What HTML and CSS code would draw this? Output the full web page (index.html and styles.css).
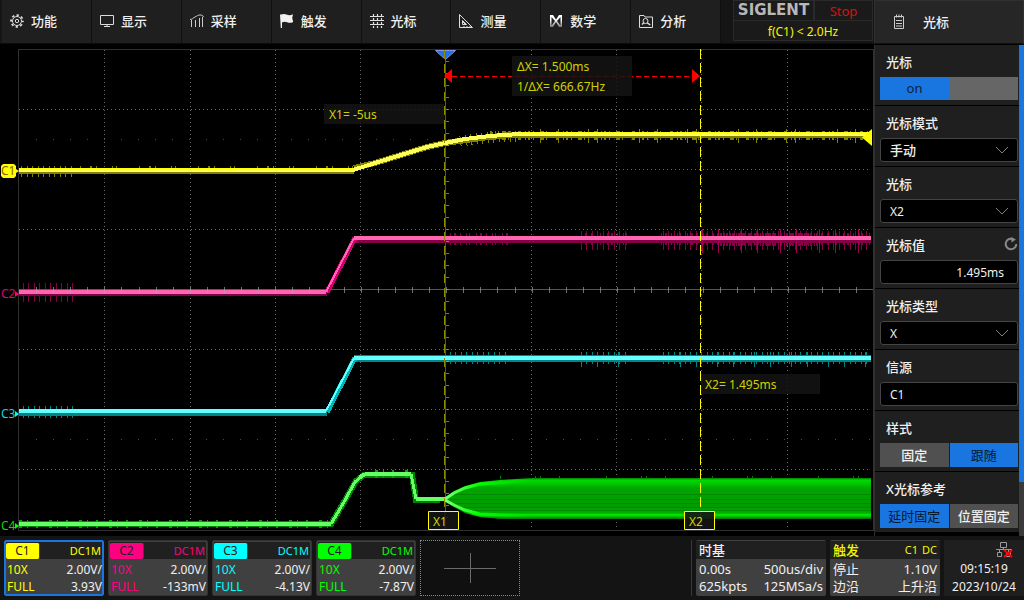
FILE: index.html
```html
<!DOCTYPE html>
<html lang="zh-CN">
<head>
<meta charset="utf-8">
<meta name="viewport" content="width=device-width, initial-scale=1">
<title>SIGLENT</title>
<link rel="stylesheet" href="styles.css">
</head>
<body>
<div class="screen">
  <div class="upper">
    <main class="scope">
      <header class="topbar">
        <nav class="menu">
          <button class="menu-item"><svg class="icon" viewBox="0 0 14 14" fill="none" stroke="#ddd"><circle cx="7" cy="7" r="4.500"/><circle cx="7" cy="7" r="5.900" stroke-width="1.800" stroke-dasharray="2.320 2.314" stroke-dashoffset="1.160"/><circle cx="7" cy="7" r="1.700"/></svg>功能</button>
          <button class="menu-item"><svg class="icon" viewBox="0 0 14 14" fill="none" stroke="#ddd"><path d="M.5 1.500h13v9H.5zM7 10.500v2M4 12.500h6"/></svg>显示</button>
          <button class="menu-item"><svg class="icon" viewBox="0 0 14 14" fill="none" stroke="#ccc"><path d="M1.500 13V6M5.500 13V6M9.500 13V4M12.500 13V3M0 5.500c2 0 3-1.500 5-2.500s3-2 5-2 3 .5 3.500 2"/></svg>采样</button>
          <button class="menu-item"><svg class="icon" viewBox="0 0 14 14"><path d="M0 .500h1.500c2-1 4-.3 5.500.3s3.500.9 6-.5l-.8 3.700 1 4c-2.500 1.200-4.500 1-6 .3S3.500 7.500 2 8.500V14H.8z" fill="#f2f2f2"/></svg>触发</button>
          <button class="menu-item"><svg class="icon" viewBox="0 0 14 14" fill="none" stroke="#e0e0e0" stroke-width="1.200" stroke-dasharray="3 1"><path d="M3.500 0v14M7.500 0v14M11.500 0v14M0 2.500h14M0 6.500h14M0 10.500h14"/></svg>光标</button>
          <button class="menu-item"><svg class="icon" viewBox="0 0 14 14" fill="none" stroke="#ddd"><path d="M.5 .5v13h13zM3.500 6.500v4h4zM3.500 7.500l3 3M11 13v-1M8 13v-1M5 13v-1"/></svg>测量</button>
          <button class="menu-item"><svg class="icon" viewBox="0 0 14 14"><defs><linearGradient id="mathFill" x2="0" y2="1"><stop offset=".4" stop-color="#fff"/><stop offset="1" stop-color="#777"/></linearGradient></defs><path d="M1 1h3l3 4.500L10 1h3v12h-3L7 8l-3 5H1zM2.500 3v8.500L6 7zM11.500 3v8.500L8 7z" fill="url(#mathFill)" fill-rule="evenodd"/></svg>数学</button>
          <button class="menu-item"><svg class="icon" viewBox="0 0 14 14" fill="none" stroke="#ddd"><path d="M.5 1.500h4.500l1 1.500h7.500v10.500H.5z"/><circle cx="6.500" cy="7" r="2.500"/><path d="M8.300 8.800l3 2.200M3 10.500l2-2" stroke-width="1.500"/></svg>分析</button>
        </nav>
        <div class="status">
          <div class="status-row"><strong class="brand">SIGLENT</strong><span class="run-state">Stop</span></div>
          <div class="freq">f(C1) &lt; 2.0Hz</div>
        </div>
      </header>

      <svg class="plot" viewBox="0 44 874 490" role="img" aria-label="C1 C2 C3 C4">
        <defs>
          <linearGradient id="burst" x2="0" y2="1">
            <stop offset="0" stop-color="#007d00"/><stop offset=".05" stop-color="#00d800"/><stop offset=".14" stop-color="#00c800"/><stop offset=".25" stop-color="#00a500"/><stop offset=".7" stop-color="#009c00"/><stop offset=".85" stop-color="#00ad00"/><stop offset=".9" stop-color="#00ef00"/><stop offset=".95" stop-color="#00b000"/><stop offset="1" stop-color="#007000"/>
          </linearGradient>
          <linearGradient id="burstGlow"><stop offset="0" stop-color="#80ff80"/><stop offset=".4" stop-color="#0f0"/><stop offset="1" stop-color="#0f0" stop-opacity="0"/></linearGradient>
          <clipPath id="burstClip"><path d="M445 497L454 491 465 486 480 482 500 480 530 478H871V519H500L480 517 465 513 454 507 445 502z"/></clipPath>
        </defs>

        <g class="grid" fill="none" stroke="#6a6a6a" shape-rendering="crispEdges">
          <path stroke="#303030" d="M18.500 49.500H873.500V530.500H18.500z"/>
          <path stroke-dasharray="1 3" d="M104.500 50V530M190.500 50V530M275.500 50V530M360.500 50V530M531.500 50V530M616.500 50V530M701.500 50V530M787.500 50V530"/>
          <path stroke-dasharray="1 3" d="M19 109.500H870M19 169.500H870M19 229.500H870M19 349.500H870M19 409.500H870M19 469.500H870"/>
          <path stroke="#484848" stroke-dasharray="1 16" d="M36 139.500H870M36 439.500H870"/>
          <path stroke="#555" d="M19 289.500H873M445.500 50V530"/>
        </g>

        <g fill="none" shape-rendering="crispEdges">
          <path stroke="#828200" stroke-width="6" d="M19 171H354M354 168L375 163 427 147 445 143 480 138 510 135H871"/>
          <path stroke="#828200" stroke-width="8" stroke-dasharray="1 9 2 4 1 15 1 3 1 22" d="M80 170H354"/>
          <path stroke="#828200" stroke-width="9" stroke-dasharray="2 3 1 6 4 2 1 9 3 4 1 2" d="M490 135H871"/>
          <path stroke="#828200" stroke-width="14" stroke-dasharray="1 17 1 29 1 8 1 41" d="M540 136H871"/>
          <path stroke="#828200" stroke-width="11" stroke-dasharray="1 5 1 4" d="M21 171H76M460 141L485 138 510 136H520"/>
          <path stroke="#ffff5a" stroke-width="4" d="M19 170H353L375 163 427 147 445 143 465 139 490 136 520 134H871"/>
          <path stroke="#ff0" stroke-width="1" d="M19 168.500H353M520 132.500H871"/>

          <path stroke="#850047" stroke-width="7" d="M19 292H327M354 239H871"/>
          <path stroke="#d00070" stroke-width="5" d="M327 292L355 238"/>
          <path stroke="#850047" stroke-width="19" stroke-dasharray="1 4 1 5" d="M23 292H76M581 240H627M663 240H871"/>
          <path stroke="#850047" stroke-width="12" stroke-dasharray="1 3 2 4 1 5 1 2 1 6" d="M450 239H510M581 239H627M661 239H871"/>
          <path stroke="#850047" stroke-width="13" stroke-dasharray="2 2 1 1" d="M720 239H818"/>
          <path stroke="#a00055" stroke-width="24" stroke-dasharray="1 15 1 22" d="M702 241H871"/>
          <path stroke="#ff65b0" stroke-width="4" d="M19 292H326M354 238H871"/>
          <path stroke="#ff65b0" stroke-width="2" d="M326 292L354 238"/>
          <path stroke="#ff0080" stroke-width="1" d="M19 289.500H326"/>

          <path stroke="#008585" stroke-width="7" d="M19 412H327M354 358H871"/>
          <path stroke="#00b5b5" stroke-width="5" d="M327 412L355 358"/>
          <path stroke="#008585" stroke-width="12" stroke-dasharray="1 4 1 5" d="M23 412H76M450 358H510M581 358H627M663 358H871"/>
          <path stroke="#008585" stroke-width="15" stroke-dasharray="1 15 1 20" d="M581 359H627M680 359H871"/>
          <path stroke="#65ffff" stroke-width="4" d="M19 411H326M354 358H871"/>
          <path stroke="#65ffff" stroke-width="2" d="M326 411L354 358"/>

          <path stroke="#008400" stroke-width="6" d="M19 524H331L344 502 356 481 364 475H412L416 500H440"/>
          <path stroke="#00a800" stroke-width="8" stroke-dasharray="3 5 1 8 2 11" d="M19 524H330M375 474H410"/>
          <path stroke="#65ff65" stroke-width="4" d="M19 524H331M360 477L366 474H411M416 499H445"/>
          <path stroke="#65ff65" stroke-width="3" d="M331 524L344 502 355 482 361 477M411 474L416 499"/>
        </g>
        <g clip-path="url(#burstClip)">
          <path fill="url(#burst)" d="M445 478H871V519H445z"/>
          <path fill="none" stroke="#008a00" shape-rendering="crispEdges" d="M455 494.500H871M450 499.500H871M455 503.500H871M460 507.500H871M470 510.500H871"/>
          <path fill="none" stroke="url(#burstGlow)" stroke-width="3" d="M445 499L454 493 465 488 480 484 530 481M445 500L454 505 465 510 480 514 530 516"/>
        </g>
        <path stroke="#008000" stroke-width="3" stroke-dasharray="1 34 1 4 1 18 1 46" fill="none" d="M500 477.500H871" shape-rendering="crispEdges"/>

        <g fill="none" stroke="#aaa" stroke-opacity=".65" shape-rendering="crispEdges">
          <path stroke-width="6" stroke-dasharray="1 16.090" d="M36 290H870"/>
          <path stroke-width="3" stroke-dasharray="1 11" d="M447 61V530"/>
        </g>

        <path d="M435.500 50.500H455.500L445.500 59.500z" fill="#1976de" stroke="#9090e8"/>
        <path d="M862 137.500L872 129V146z" fill="#ff0"/>
        <g fill="none" shape-rendering="crispEdges">
          <path stroke="#8c8c00" stroke-dasharray="9 5" d="M444.500 50V530"/>
          <path stroke="#ff0" stroke-dasharray="10 4" d="M700.500 49V530"/>
          <path stroke="red" stroke-dasharray="5 3" d="M452 76.500H693"/>
        </g>
        <path d="M444 76L452 69V83zM700 76L692 69V83z" fill="red"/>

        <g fill="#141414" fill-opacity=".85">
          <path d="M324 104h120v20H324zM512 56h120v40H512zM701 374h119v20H701z"/>
          <path d="M428.500 511.500h30v18h-30zM684.500 511.500h30v18h-30z" fill-opacity=".9" stroke="#ff0"/>
        </g>
        <g class="readout">
          <text x="329" y="119">X1= -5us</text>
          <text x="517" y="71">ΔX= 1.500ms</text>
          <text x="517" y="91">1/ΔX= 666.67Hz</text>
          <text x="705" y="389">X2= 1.495ms</text>
          <text x="433" y="526">X1</text>
          <text x="689" y="526">X2</text>
        </g>

        <path d="M3 164H14L16 166V169L19 171 16 173V176L14 178H3L1 176V166z" fill="#ff0"/>
        <path d="M15 291L19 294 15 297z" fill="#ff0080"/>
        <path d="M15 411L19 414 15 417z" fill="#0ff"/>
        <path d="M15 523L19 526 15 529z" fill="#0f0"/>
        <g class="trace-tags">
          <text x="1" y="175" fill="#8a6400">C1</text>
          <text x="1" y="298" fill="#e00078">C2</text>
          <text x="1" y="418" fill="#00dede">C3</text>
          <text x="1" y="530" fill="#00dc00">C4</text>
        </g>
      </svg>
    </main>

    <aside class="side">
      <header class="side-head">
        <svg class="clip-icon" viewBox="0 0 12 16" fill="none" stroke="#ccc"><path d="M1.500 2.500h9v12h-9zM3.500 .5v3M6 .5v3M8.500 .5v3M3 6.500h6M3 9.500h6M3 12h6"/></svg>
        <h1 class="side-title">光标</h1>
      </header>
      <div class="side-scroll">
        <form class="fields">
          <div class="field"><span class="label" id="cursor-on">光标</span>
            <button type="button" class="switch" role="switch" aria-checked="true" aria-labelledby="cursor-on"><span class="switch-on">on</span></button></div>
          <div class="field"><label class="label" for="mode">光标模式</label>
            <div class="pick"><select class="control" id="mode"><option>手动</option></select><svg class="chevron" viewBox="0 0 14 8"><path d="M1 1l6 6 6-6"/></svg></div></div>
          <div class="field"><label class="label" for="cursor">光标</label>
            <div class="pick"><select class="control" id="cursor"><option>X2</option></select><svg class="chevron" viewBox="0 0 14 8"><path d="M1 1l6 6 6-6"/></svg></div></div>
          <div class="field"><div class="label-row"><label class="label" for="value">光标值</label>
            <button type="button" class="reset" aria-label="重置"><svg viewBox="0 0 14 14"><path d="M9.500 2.300A5.300 5.300 0 1 0 12.300 7" fill="none" stroke="#888" stroke-width="2"/><path d="M7 0l5 2.500-4.500 3z" fill="#888"/></svg></button></div>
            <input class="control number" id="value" value="1.495ms"></div>
          <div class="field"><label class="label" for="type">光标类型</label>
            <div class="pick"><select class="control" id="type"><option>X</option></select><svg class="chevron" viewBox="0 0 14 8"><path d="M1 1l6 6 6-6"/></svg></div></div>
          <div class="field"><label class="label" for="source">信源</label>
            <input class="control" id="source" value="C1"></div>
          <div class="field"><span class="label">样式</span>
            <div class="choice"><button type="button" class="option">固定</button><button type="button" class="option chosen">跟随</button></div></div>
          <div class="field"><span class="label">X光标参考</span>
            <div class="choice"><button type="button" class="option chosen">延时固定</button><button type="button" class="option">位置固定</button></div></div>
        </form>
        <div class="track"><div class="thumb"></div></div>
      </div>
    </aside>
  </div>

  <footer class="bottom">
    <button class="card channel c1 active"><span class="head"><b class="tag">C1</b><span class="coupling">DC1M</span></span><span class="line"><i>10X</i><span>2.00V/</span></span><span class="line"><i>FULL</i><span>3.93V</span></span></button>
    <button class="card channel c2"><span class="head"><b class="tag">C2</b><span class="coupling">DC1M</span></span><span class="line"><i>10X</i><span>2.00V/</span></span><span class="line"><i>FULL</i><span>-133mV</span></span></button>
    <button class="card channel c3"><span class="head"><b class="tag">C3</b><span class="coupling">DC1M</span></span><span class="line"><i>10X</i><span>2.00V/</span></span><span class="line"><i>FULL</i><span>-4.13V</span></span></button>
    <button class="card channel c4"><span class="head"><b class="tag">C4</b><span class="coupling">DC1M</span></span><span class="line"><i>10X</i><span>2.00V/</span></span><span class="line"><i>FULL</i><span>-7.87V</span></span></button>
    <button class="add" aria-label="添加"><svg viewBox="0 0 52 30"><path d="M0 15.500h52M26.500 0v30" stroke="#6a6a6a" shape-rendering="crispEdges"/></svg></button>
    <div class="info">
      <button class="card timebase"><span class="head">时基</span><span class="line"><span>0.00s</span><span>500us/div</span></span><span class="line"><span>625kpts</span><span>125MSa/s</span></span></button>
      <button class="card trigger"><span class="head">触发<span class="source"><span>C1</span><span>DC</span></span></span><span class="line"><span>停止</span><span>1.10V</span></span><span class="line"><span>边沿</span><span>上升沿</span></span></button>
      <div class="clock">
        <svg class="net" viewBox="0 0 17 16" fill="none"><path d="M4.500 .5h6v5h-6zM7.500 6v2M0 7.500h16M3.500 8v2M12.500 8v2M1.500 10.500h4v4h-4zM10.500 10.500h4v4h-4z" stroke="#999"/><path d="M8 8l8 7M16 8l-8 7" stroke="red" stroke-width="2"/></svg>
        <time>09:15:19</time><time>2023/10/24</time>
      </div>
    </div>
  </footer>
</div>
</body>
</html>
```

FILE: styles.css
```css
* { box-sizing: border-box; }

body {
  margin: 0;
  background: #000;
  color: #f0f0f0;
  font: 12px/16px "Noto Sans", "Noto Sans CJK SC", sans-serif;
}

button, input, select {
  margin: 0;
  padding: 0;
  border: 0;
  border-radius: 0;
  background: none;
  color: inherit;
  font: inherit;
}

.screen { display: flex; flex-direction: column; min-height: 100vh; }
.upper { display: grid; grid-template-columns: minmax(0, 1fr) 150px; flex: 1; }
.scope { display: flex; flex-direction: column; }

/* Top bar */
.topbar { display: flex; height: 44px; padding-left: 2px; background: #151515; border-bottom: 1px solid #0c0c0c; }
.menu { display: flex; flex: 0 1 719px; }
.menu-item {
  display: flex;
  flex: 1;
  align-items: center;
  gap: 7px;
  padding: 0 0 2px 8px;
  border-right: 1px solid #101010;
  background: #1f1f1f;
  font-size: 13px;
  font-weight: 500;
  white-space: nowrap;
}
.icon { width: 14px; height: 14px; flex: none; }
.status { flex: 1; margin: 0 1px 2px 12px; border: 1px solid #2a2a2a; background: #1a1a1a; text-align: center; }
.status-row { display: grid; grid-template-columns: 79px 1fr; height: 20px; border-bottom: 1px solid #2a2a2a; }
.brand { color: #b8b8b8; font: bold 15px/18px "DejaVu Sans", sans-serif; }
.run-state { border-left: 2px solid #2a2a2a; color: #d81010; font-size: 13px; line-height: 20px; }
.freq { color: #f4f400; font-size: 12px; line-height: 21px; }

/* Waveforms */
.plot { display: block; width: 100%; }
.readout { fill: #d0d000; font-size: 12px; }
.trace-tags { font-size: 12px; }

/* Settings panel */
.side { display: flex; flex-direction: column; }
.side-head { display: flex; align-items: center; gap: 18px; height: 44px; padding: 0 0 1px 18px; border: 1px solid #303030; border-bottom-color: #101010; background: #262626; }
.clip-icon { width: 12px; height: 16px; }
.side-title { margin: 0; font-size: 13px; font-weight: 500; }
.side-scroll { display: flex; flex: 1; margin-top: 1px; border-left: 1px solid #303030; }
.fields { flex: 1; }
.field { height: 61px; padding: 9px 1px 0 5px; border-bottom: 1px solid #000; background: #1f1f1f; }
.label { display: block; height: 23px; padding-left: 6px; font-size: 13px; font-weight: 500; }
.label-row { display: flex; justify-content: space-between; }
.reset { width: 14px; height: 14px; }
.reset svg { display: block; }
.control {
  display: block;
  width: 100%;
  height: 24px;
  padding: 1px 9px 0;
  border: 1px solid #444;
  border-radius: 3px;
  background: #000;
  appearance: none;
  font-size: 12px;
}
#mode { padding-top: 0; font-size: 13px; font-weight: 500; }
.number { padding-right: 13px; text-align: right; }
.pick { position: relative; }
.chevron { position: absolute; right: 9px; top: 8px; width: 14px; height: 8px; fill: none; stroke: #808080; pointer-events: none; }
.switch { display: flex; width: 100%; height: 23px; background: #666; }
.switch-on { width: 50%; background: #1976e0; color: #0a2040; font-size: 13px; line-height: 23px; }
.choice { display: grid; grid-template-columns: 1fr 1fr; gap: 1px; }
.option { height: 24px; background: #505050; font-size: 13px; font-weight: 500; }
.chosen { background: #1976e0; color: #06182e; font-weight: 400; }
.track { width: 5px; background: #3a3a3a; }
.thumb { height: 89%; background: #1976e0; }

/* Bottom bar */
.bottom { display: flex; gap: 4px; height: 64px; padding: 4px 0 4px 4px; background: #141414; }
.card { display: block; padding: 1px; border: 1px solid #333; border-radius: 2px; background: #404040; }
.channel { width: 100px; }
.active { border-color: #1976e0; box-shadow: inset 0 0 0 1px #1976e0; }
.head { display: flex; align-items: center; justify-content: space-between; height: 17px; background: #202020; }
.line { display: flex; justify-content: space-between; line-height: 17px; }
.head + .line { padding-top: 2px; }
.channel .line { padding-left: 1px; }
.line i { color: var(--trace); font-style: normal; }
.tag { width: 34px; height: 16px; border-right: 1px solid #404040; border-radius: 2px; background: var(--trace); color: #222; font-size: 12px; font-weight: 400; line-height: 16px; }
.coupling { padding-right: 1px; color: var(--trace); font-size: 11px; }
.c1 { --trace: #ff0; }
.c2 { --trace: #ff0080; }
.c3 { --trace: #0ff; }
.c4 { --trace: #0f0; }
.add { display: grid; place-items: center; width: 100px; border: 1px dotted #888; background: #101010; }
.add svg { width: 52px; height: 30px; }
.info { display: flex; gap: 4px; margin-left: auto; padding-left: 4px; border-left: 1px solid #383838; }
.info .card { padding: 0; border: 0; }
.info .head { height: 18px; padding: 0 3px; font-size: 13px; font-weight: 500; }
.timebase { width: 130px; }
.info .line { padding-left: 3px; padding-right: 3px; font-size: 13px; }
.trigger { width: 110px; }
.trigger .head { color: #f4f400; }
.source { display: flex; gap: 4px; font-size: 11px; font-weight: 400; }
.clock { display: flex; flex-direction: column; align-items: center; width: 80px; background: #1f1f1f; padding-top: 2px; line-height: 18px; }
.net { width: 17px; height: 16px; margin: 0 11px 2px auto; }
```
